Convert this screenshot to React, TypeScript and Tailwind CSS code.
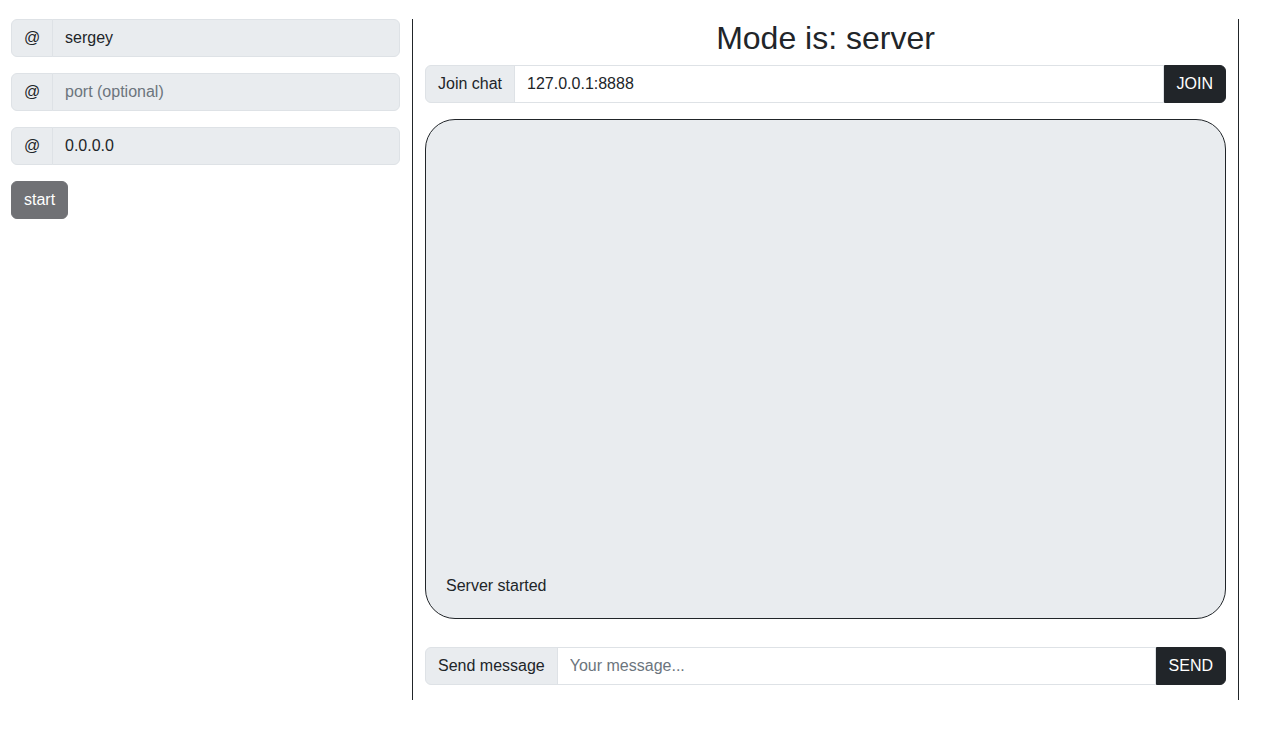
function AtField({ value, placeholder }: { value?: string; placeholder?: string }) {
  return (
    <div className="flex h-[38px]">
      <span className="flex w-[42px] items-center justify-center rounded-l-[6px] border border-[#dee2e6] bg-[#e9ecef] text-[#212529]">
        @
      </span>
      <input
        readOnly
        value={value ?? ""}
        placeholder={placeholder}
        className="-ml-px min-w-0 flex-1 rounded-r-[6px] border border-[#dee2e6] bg-[#e9ecef] px-3 text-[#212529] placeholder:text-[#6c757d] outline-none"
      />
    </div>
  );
}

export default function App() {
  return (
    <div className="flex h-[749px] bg-white text-[16px] text-[#212529] font-['Liberation_Sans',Arial,sans-serif]">
      {/* Settings */}
      <div className="mt-[19px] flex h-[681px] w-[413px] flex-col gap-4 border-r border-[#212529] pl-[11px] pr-3">
        <AtField value="sergey" />
        <AtField placeholder="port (optional)" />
        <AtField value="0.0.0.0" />
        <div>
          <button className="h-[38px] rounded-[6px] border border-[#707175] bg-[#707175] px-3 text-white">start</button>
        </div>
      </div>

      {/* Chat */}
      <div className="mt-[19px] flex h-[681px] w-[826px] flex-col border-r border-[#212529] px-3">
        <h2 className="h-[38px] text-center text-[32px] leading-[38px]">Mode is: server</h2>

        <div className="mt-2 flex h-[38px]">
          <span className="flex items-center rounded-l-[6px] border border-[#dee2e6] bg-[#e9ecef] px-3">
            Join chat
          </span>
          <input
            readOnly
            value="127.0.0.1:8888"
            className="-ml-px min-w-0 flex-1 border border-[#dee2e6] bg-white px-3 outline-none"
          />
          <button className="rounded-r-[6px] border border-[#212529] bg-[#212529] px-3 text-white">JOIN</button>
        </div>

        <div className="mt-4 flex h-[500px] flex-col justify-end rounded-[30px] border border-[#212529] bg-[#e9ecef] p-5">
          <p className="leading-6">Server started</p>
        </div>

        <div className="mt-7 flex h-[38px]">
          <span className="flex items-center rounded-l-[6px] border border-[#dee2e6] bg-[#e9ecef] px-3">
            Send message
          </span>
          <input
            placeholder="Your message..."
            className="-ml-px min-w-0 flex-1 border border-[#dee2e6] bg-white px-3 placeholder:text-[#6c757d] outline-none"
          />
          <button className="rounded-r-[6px] border border-[#212529] bg-[#212529] px-3 text-white">SEND</button>
        </div>
      </div>
    </div>
  );
}
